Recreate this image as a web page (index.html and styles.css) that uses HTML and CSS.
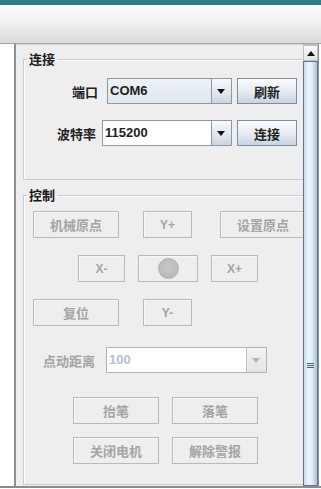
FILE: index.html
```html
<!DOCTYPE html>
<html lang="zh">
<head>
    <meta charset="UTF-8">
    <title>控制面板</title>
    <link rel="stylesheet" href="styles.css">
</head>
<body>
    <div class="window">
        <div class="titlebar"></div>

        <div class="main">
            <div class="gutter"></div>

            <div class="panel">
                <fieldset class="group group-connect">
                    <legend>连接</legend>

                    <div class="field-row row-port">
                        <span class="field-label">端口</span>
                        <div class="combo combo-port">
                            <span class="combo-value">COM6</span>
                            <span class="combo-arrow"></span>
                        </div>
                        <button class="btn">刷新</button>
                    </div>

                    <div class="field-row row-baud">
                        <span class="field-label">波特率</span>
                        <div class="combo combo-baud">
                            <span class="combo-value">115200</span>
                            <span class="combo-arrow"></span>
                        </div>
                        <button class="btn">连接</button>
                    </div>
                </fieldset>

                <fieldset class="group group-control">
                    <legend>控制</legend>

                    <div class="btn-row row-top">
                        <button class="btn off w-wide">机械原点</button>
                        <button class="btn off w-small">Y+</button>
                        <button class="btn off w-wide">设置原点</button>
                    </div>

                    <div class="btn-row row-mid">
                        <button class="btn off w-x">X-</button>
                        <button class="btn off w-center"><span class="dot"></span></button>
                        <button class="btn off w-x">X+</button>
                    </div>

                    <div class="btn-row row-bottom">
                        <button class="btn off w-wide">复位</button>
                        <button class="btn off w-small">Y-</button>
                    </div>

                    <div class="field-row row-step">
                        <span class="field-label off">点动距离</span>
                        <div class="combo combo-step off">
                            <span class="combo-value">100</span>
                            <span class="combo-arrow"></span>
                        </div>
                    </div>

                    <div class="btn-row row-pen">
                        <button class="btn off w-pen">抬笔</button>
                        <button class="btn off w-pen">落笔</button>
                    </div>

                    <div class="btn-row row-motor">
                        <button class="btn off w-pen">关闭电机</button>
                        <button class="btn off w-pen">解除警报</button>
                    </div>
                </fieldset>
            </div>

            <div class="scrollbar">
                <div class="scroll-up"></div>
                <div class="scroll-thumb"><span class="grip"></span></div>
            </div>

            <div class="edge"></div>
        </div>

        <div class="bottom-line"></div>
    </div>
</body>
</html>
```

FILE: styles.css
```css
:root {
    --panel-bg: #eeeeee;
    --group-line: #c6ccd3;
    --btn-border: #7f8c99;
    --off-border: #b9b9b9;
    --off-text: #a4a4a4;
}

* {
    margin: 0;
    padding: 0;
    box-sizing: border-box;
}

body {
    width: 321px;
    height: 489px;
    overflow: hidden;
    background: #ffffff;
    font-family: "Noto Sans CJK SC", "Liberation Sans", sans-serif;
}

.window {
    display: flex;
    flex-direction: column;
    height: 489px;
}

.titlebar {
    height: 44px;
    border-top: 5px solid #2f7d8b;
    border-bottom: 1px solid #a6a6a6;
    background: linear-gradient(#fcfcfc, #f2f2f2 40%, #dadada);
}

.main {
    display: flex;
    height: 442px;
}

.gutter {
    width: 16px;
    background: #ffffff;
    border-right: 2px solid #8f8f8f;
}

.panel {
    width: 287px;
    overflow: hidden;
    background: var(--panel-bg);
    border-top: 1px solid #d2d6da;
    padding: 6px 0 0 7px;
}

/* titled groups */
.group {
    width: 300px;
    border: 1px solid var(--group-line);
    box-shadow: inset 1px 1px 0 #ffffff;
}

.group legend {
    margin-left: 3px;
    padding: 0 2px;
    font-size: 13px;
    font-weight: 700;
    line-height: 16px;
    color: #1a1a1a;
}

.group-connect {
    padding-top: 11px;
    padding-bottom: 33px;
}

.group-control {
    margin-top: 7px;
    padding-top: 8px;
    padding-bottom: 20px;
}

/* label + combo rows */
.field-row {
    display: flex;
    align-items: center;
    height: 26px;
}

.row-port {
    padding-left: 48px;
}

.row-port .field-label {
    margin-right: 9px;
}

.row-baud {
    margin-top: 16px;
    padding-left: 33px;
}

.row-baud .field-label {
    margin-right: 6px;
}

.row-step {
    margin-top: 21px;
    padding-left: 19px;
}

.row-step .field-label {
    margin-right: 11px;
}

.field-label {
    font-size: 13px;
    font-weight: 700;
    color: #222222;
}

.field-label.off {
    color: var(--off-text);
}

.combo {
    display: flex;
    height: 26px;
    border: 1px solid #8a99a8;
    font-family: "Liberation Sans", sans-serif;
    font-size: 13px;
    font-weight: 700;
    color: #222222;
}

.combo-port {
    width: 125px;
    background: linear-gradient(#eef2f6, #dfe7ef);
}

.combo-baud {
    width: 130px;
    background: #ffffff;
}

.combo-step {
    width: 161px;
    background: #ffffff;
    border-color: #a9b3bd;
    color: #b6c0cc;
}

.combo-value {
    flex: 1;
    padding-left: 2px;
    line-height: 24px;
}

.combo-arrow {
    position: relative;
    width: 20px;
    border-left: 1px solid #8a99a8;
    background: linear-gradient(#f8fafc, #dfe6ee 60%, #cbd5df);
}

.combo-arrow::after {
    content: '';
    position: absolute;
    left: 5px;
    top: 10px;
    border-left: 4px solid transparent;
    border-right: 4px solid transparent;
    border-top: 5px solid #111111;
}

.combo-step .combo-arrow {
    border-left-color: #b8c1ca;
    background: linear-gradient(#f4f4f4, #e4e4e4);
}

.combo-step .combo-arrow::after {
    border-top-color: #a9b6c4;
}

/* buttons */
.btn {
    flex: none;
    width: 60px;
    height: 26px;
    border: 1px solid var(--btn-border);
    background: linear-gradient(#fbfcfd, #e4eaf1 55%, #c8d4e0);
    font-family: "Noto Sans CJK SC", "Liberation Sans", sans-serif;
    font-size: 13px;
    font-weight: 700;
    color: #222222;
    margin-left: 5px;
}

.btn.off {
    margin-left: 0;
    border-color: var(--off-border);
    background: #eeeeee;
    color: var(--off-text);
    box-shadow: inset 1px 1px 0 #f8f8f8;
}

.btn-row {
    display: flex;
    height: 27px;
}

.btn-row .btn {
    height: 27px;
}

.row-top {
    padding-left: 9px;
    gap: 24px;
}

.row-top .btn + .btn + .btn {
    margin-left: 4px;
}

.row-mid {
    margin-top: 17px;
    padding-left: 54px;
    gap: 13px;
}

.row-bottom {
    margin-top: 17px;
    padding-left: 9px;
    gap: 24px;
}

.row-pen {
    margin-top: 24px;
    padding-left: 49px;
    gap: 13px;
}

.row-motor {
    margin-top: 13px;
    padding-left: 49px;
    gap: 13px;
}

.w-wide { width: 86px; }
.w-small { width: 49px; }
.w-x { width: 47px; }
.w-center {
    width: 60px;
    display: flex;
    align-items: center;
    justify-content: center;
}
.w-pen { width: 86px; }

.btn.w-x,
.btn.w-small {
    font-family: "Liberation Sans", sans-serif;
    font-size: 12px;
}

.dot {
    width: 21px;
    height: 21px;
    border-radius: 50%;
    border: 1px solid #b0b0b0;
    background: radial-gradient(circle at 50% 45%, #c9c9c9, #bdbdbd 60%, #aeaeae);
}

/* scrollbar */
.scrollbar {
    display: flex;
    flex-direction: column;
    width: 15px;
    border-top: 1px solid #b5bcc4;
}

.scroll-up {
    position: relative;
    height: 16px;
    background: linear-gradient(#fbfbfb, #e4e4e4);
    border: 1px solid #b9c2cc;
}

.scroll-up::after {
    content: '';
    position: absolute;
    left: 3px;
    top: 5px;
    border-left: 4px solid transparent;
    border-right: 4px solid transparent;
    border-bottom: 5px solid #111111;
}

.scroll-thumb {
    flex: 1;
    position: relative;
    border: 1px solid #5d7694;
    background: linear-gradient(to right, #c8d9ed, #eef4fb 35%, #e4edf8 60%, #a7bfdc);
}

.grip {
    position: absolute;
    left: 3px;
    top: 301px;
    width: 7px;
    height: 5px;
    border-top: 1px solid #4c5f78;
    border-bottom: 1px solid #4c5f78;
}

.grip::after {
    content: '';
    position: absolute;
    left: 0;
    right: 0;
    top: 1px;
    border-top: 1px solid #4c5f78;
}

.edge {
    flex: 1;
    border-left: 1px solid #8f8f8f;
    background: #ffffff;
}

.bottom-line {
    height: 3px;
    border-top: 2px solid #8c8c8c;
    background: #ffffff;
}
```
